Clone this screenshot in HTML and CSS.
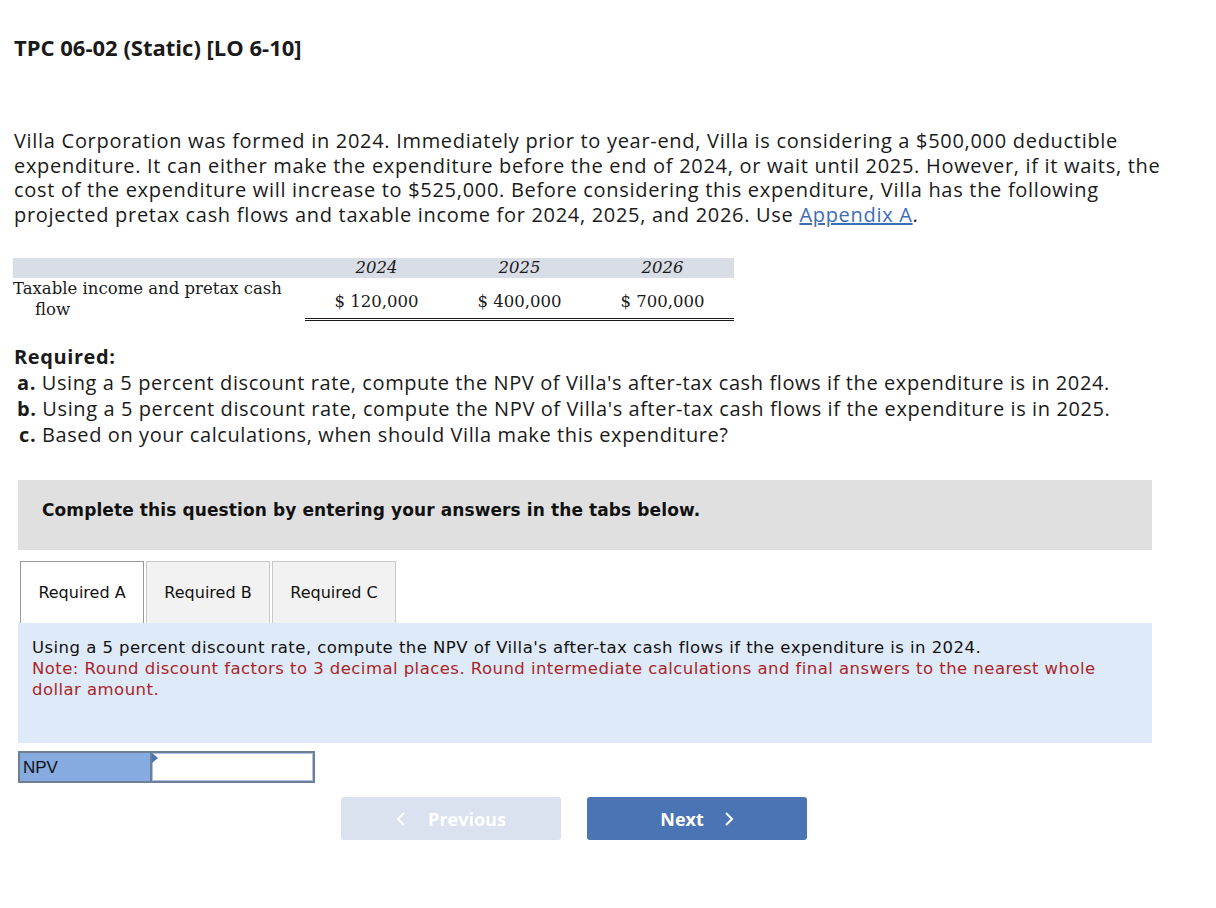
FILE: index.html
```html
<!DOCTYPE html>
<html>
<head>
<meta charset="utf-8">
<link rel="stylesheet" href="styles.css">
</head>
<body>
<div class="page">
  <h1 class="title">TPC 06-02 (Static) [LO 6-10]</h1>
  <p class="intro">Villa Corporation was formed in 2024. Immediately prior to year-end, Villa is considering a $500,000 deductible expenditure. It can either make the expenditure before the end of 2024, or wait until 2025. However, if it waits, the cost of the expenditure will increase to $525,000. Before considering this expenditure, Villa has the following projected pretax cash flows and taxable income for 2024, 2025, and 2026. Use <a class="link" href="#">Appendix A</a>.</p>

  <table class="data">
    <thead>
      <tr><th class="lbl"></th><th>2024</th><th>2025</th><th>2026</th></tr>
    </thead>
    <tbody>
      <tr>
        <td class="lbl"><span class="l1">Taxable income and pretax cash</span><span class="l2">flow</span></td>
        <td class="val">$ 120,000</td>
        <td class="val">$ 400,000</td>
        <td class="val">$ 700,000</td>
      </tr>
    </tbody>
  </table>

  <div class="required">
    <div class="req-head">Required:</div>
    <div class="req-item"><b>a.</b> Using a 5 percent discount rate, compute the NPV of Villa's after-tax cash flows if the expenditure is in 2024.</div>
    <div class="req-item"><b>b.</b> Using a 5 percent discount rate, compute the NPV of Villa's after-tax cash flows if the expenditure is in 2025.</div>
    <div class="req-item c"><b>c.</b> Based on your calculations, when should Villa make this expenditure?</div>
  </div>

  <div class="instructions">Complete this question by entering your answers in the tabs below.</div>

  <div class="tabs">
    <div class="tab active">Required A</div>
    <div class="tab">Required B</div>
    <div class="tab">Required C</div>
  </div>
  <div class="panel">
    <div class="panel-text">Using a 5 percent discount rate, compute the NPV of Villa's after-tax cash flows if the expenditure is in 2024.</div>
    <div class="panel-note">Note: Round discount factors to 3 decimal places. Round intermediate calculations and final answers to the nearest whole dollar amount.</div>
  </div>

  <div class="answer">
    <div class="answer-label">NPV</div>
    <div class="answer-input"><span class="flag"></span></div>
  </div>

  <div class="nav">
    <button class="btn prev"><svg class="chev" width="10" height="16" viewBox="0 0 10 16"><polyline points="8,2 2,8 8,14" fill="none" stroke="#fff" stroke-width="2"/></svg>Previous</button>
    <button class="btn next">Next<svg class="chev r" width="10" height="16" viewBox="0 0 10 16"><polyline points="2,2 8,8 2,14" fill="none" stroke="#fff" stroke-width="2"/></svg></button>
  </div>
</div>
</body>
</html>
```

FILE: styles.css
```css
html, body {
  margin: 0;
  padding: 0;
  background: #fff;
}
.page {
  width: 1216px;
  font-family: "Open Sans", "Liberation Sans", sans-serif;
  color: #1a1a1a;
}
.title {
  margin: 0;
  padding: 32px 0 0 14px;
  font-size: 22px;
  line-height: 30px;
  font-weight: 700;
}
.intro {
  margin: 0;
  padding: 67px 0 0 14px;
  width: 1150px;
  font-size: 20px;
  letter-spacing: 0.7px;
  line-height: 24.7px;
}
.link {
  color: #3d6db5;
  text-decoration: underline;
}
.data {
  margin: 30px 0 0 13px;
  border-collapse: collapse;
  font-family: "DejaVu Serif", serif;
  font-size: 16.5px;
  color: #1a1a1a;
}
.data th {
  background: #d9dde5;
  font-weight: 400;
  font-style: italic;
  height: 20px;
  padding: 0;
  line-height: 20px;
  width: 143px;
  text-align: center;
  vertical-align: bottom;
}
.data th.lbl {
  width: 292px;
}
.data td {
  padding: 0;
  vertical-align: middle;
}
.data td.lbl {
  padding: 0;
  line-height: 21px;
}
.data td.lbl span {
  display: block;
  white-space: nowrap;
}
.data td.lbl .l2 {
  padding-left: 22px;
}
.data td.val {
  text-align: center;
  border-bottom: 3px double #1a1a1a;
  padding-top: 6px;
}
.required {
  margin-top: 23px;
  padding-left: 14px;
  font-size: 20px;
  letter-spacing: 0.6px;
  line-height: 26px;
}
.req-head {
  font-weight: 700;
}
.req-item {
  padding-left: 3px;
}
.req-item.c {
  padding-left: 5px;
}
.instructions {
  margin: 32px 0 0 18px;
  width: 1134px;
  height: 70px;
  box-sizing: border-box;
  padding: 20px 0 0 24px;
  background: #e0e0e0;
  font-family: "DejaVu Sans", Verdana, sans-serif;
  font-weight: 700;
  font-size: 17px;
  letter-spacing: 0.1px;
  color: #111;
}
.tabs {
  display: flex;
  gap: 2px;
  margin: 11px 0 0 20px;
}
.tab {
  width: 124px;
  height: 62px;
  box-sizing: border-box;
  border: 1px solid #c9c9c9;
  border-bottom: none;
  background: #f2f2f2;
  font-family: "DejaVu Sans", Verdana, sans-serif;
  font-size: 16px;
  color: #111;
  display: flex;
  align-items: center;
  justify-content: center;
}
.tab.active {
  background: #fff;
  border-color: #999;
}
.panel {
  margin-left: 18px;
  width: 1134px;
  height: 120px;
  box-sizing: border-box;
  padding: 14px 14px 0 14px;
  background: #deeaf7;
  font-family: "DejaVu Sans", Verdana, sans-serif;
  font-size: 16.5px;
  letter-spacing: 0.45px;
  line-height: 21px;
  color: #111;
}
.panel-note {
  color: #a8262a;
}
.answer {
  display: flex;
  margin: 8px 0 0 18px;
  width: 297px;
  height: 32px;
  box-sizing: border-box;
  border: 2px solid #6f7e94;
}
.answer-label {
  width: 132px;
  background: #85abe0;
  border-right: 2px solid #6f7e94;
  font-family: "Liberation Sans", Arial, sans-serif;
  font-size: 17px;
  color: #111;
  padding: 5px 0 0 3px;
  box-sizing: border-box;
}
.answer-input {
  flex: 1;
  position: relative;
  background: #fff;
  border: 1px solid #a9c3e8;
}
.flag {
  position: absolute;
  left: -1px;
  top: -1px;
  width: 0;
  height: 0;
  border-top: 5px solid transparent;
  border-bottom: 5px solid transparent;
  border-left: 6px solid #4a74b3;
}
.nav {
  display: flex;
  gap: 26px;
  margin: 14px 0 0 341px;
}
.btn {
  width: 220px;
  height: 43px;
  border: none;
  border-radius: 3px;
  color: #fff;
  font-family: "Open Sans", "Liberation Sans", sans-serif;
  font-weight: 700;
  font-size: 18px;
  display: flex;
  align-items: center;
  justify-content: center;
  padding: 0;
}
.btn.prev {
  background: #d9e2ee;
}
.btn.next {
  background: #4a74b3;
}
.chev {
  margin-right: 22px;
}
.chev.r {
  margin-right: 0;
  margin-left: 20px;
}
```
